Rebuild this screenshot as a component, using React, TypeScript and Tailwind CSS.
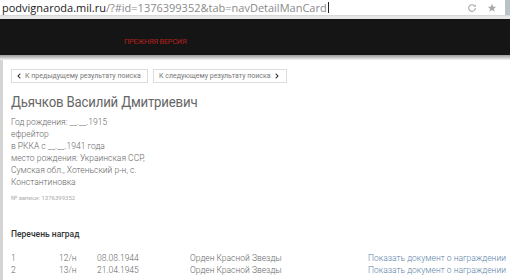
import { FaChevronLeft, FaChevronRight } from "react-icons/fa";

const info = [
  "Год рождения: __.__.1915",
  "ефрейтор",
  "в РККА с __.__.1941 года",
  "место рождения: Украинская ССР,",
  "Сумская обл., Хотеньский р-н, с.",
  "Константиновка",
];

const awards = [
  { n: "1", doc: "12/н", date: "08.08.1944", name: "Орден Красной Звезды" },
  { n: "2", doc: "13/н", date: "21.04.1945", name: "Орден Красной Звезды" },
];

const App = () => {
  return (
    <div className="w-[510px] h-[280px] overflow-hidden bg-white font-['Roboto',sans-serif]">
      {/* address bar */}
      <div className="h-[15px] flex items-center justify-between bg-white">
        <div className="pl-[2px] text-[11px] leading-[15px] font-['Open_Sans',sans-serif] flex items-center">
          <span className="text-[#222]">podvignaroda.mil.ru</span>
          <span className="text-[#8a8a8a]">/?#id=1376399352&amp;tab=navDetailManCard</span>
          <span className="ml-[1px] w-px h-[11px] bg-[#222]" />
        </div>
        <div className="flex items-center h-full">
          <svg width="10" height="10" viewBox="0 0 24 24" className="mr-[10px]">
            <path d="M20 12a8 8 0 1 1-2.3-5.6" fill="none" stroke="#a8a8a8" strokeWidth="2.6" />
            <path d="M21 3v6h-6z" fill="#a8a8a8" />
          </svg>
          <svg width="10" height="10" viewBox="0 0 24 24" className="mr-[8px]">
            <path d="M12 2l3 7h7l-5.6 4.5 2.2 7.5L12 16.6 5.4 21l2.2-7.5L2 9h7z" fill="#a8a8a8" />
          </svg>
          <div className="w-[5px] h-full bg-[#b9c1c9]" />
        </div>
      </div>
      <div className="h-[4px] bg-[#e6e6e6] border-t border-[#d8d8d8]" />

      {/* dark header */}
      <div className="h-[36px] bg-[#151515] flex items-center pl-[124px] pt-[10px]">
        <span className="text-[7.5px] text-[#b3201f] tracking-[-0.3px] uppercase">
          Прежняя версия
        </span>
      </div>
      <div className="h-[5px] bg-gradient-to-b from-[#9a9a9a] to-[#f4f4f4]" />

      {/* page */}
      <div className="flex h-[220px]">
        <div className="w-[3px] bg-[#d4d4d4]" />
        <div className="flex-1 pl-[8px]">
          <div className="flex gap-[5px] mt-[9px]">
            <div className="h-[14px] w-[137px] border border-[#dcdcdc] flex items-center gap-[3px] pl-[4px] text-[7px] text-[#777]">
              <FaChevronLeft className="text-[6px] text-[#222]" />
              <span>К предыдущему результату поиска</span>
            </div>
            <div className="h-[14px] w-[134px] border border-[#dcdcdc] flex items-center gap-[3px] pl-[5px] text-[7px] text-[#777]">
              <span>К следующему результату поиска</span>
              <FaChevronRight className="text-[6px] text-[#222]" />
            </div>
          </div>

          <h1 className="mt-[11px] text-[15px] leading-[17px] text-[#666] tracking-[-0.2px] whitespace-nowrap origin-left scale-x-[0.88]">
            Дьячков Василий Дмитриевич
          </h1>

          <div className="mt-[5px] text-[8.5px] leading-[12px] text-[#666] font-light">
            {info.map((line) => (
              <div key={line}>{line}</div>
            ))}
          </div>

          <div className="mt-[6px] text-[6px] leading-[8px] text-[#aaa]">№ записи: 1376399352</div>

          <div className="mt-[27px] text-[8.5px] leading-[10px] text-[#333] font-medium">Перечень наград</div>

          <div className="mt-[13px] text-[8.5px] leading-[12px] text-[#666] font-light">
            {awards.map((a) => (
              <div key={a.n} className="flex">
                <span className="w-[48px]">{a.n}</span>
                <span className="w-[38px]">{a.doc}</span>
                <span className="w-[93px]">{a.date}</span>
                <span className="w-[178px]">{a.name}</span>
                <span className="text-[#5a7fa8]">Показать документ о награждении</span>
              </div>
            ))}
          </div>
        </div>
      </div>
    </div>
  );
};

export default App;
